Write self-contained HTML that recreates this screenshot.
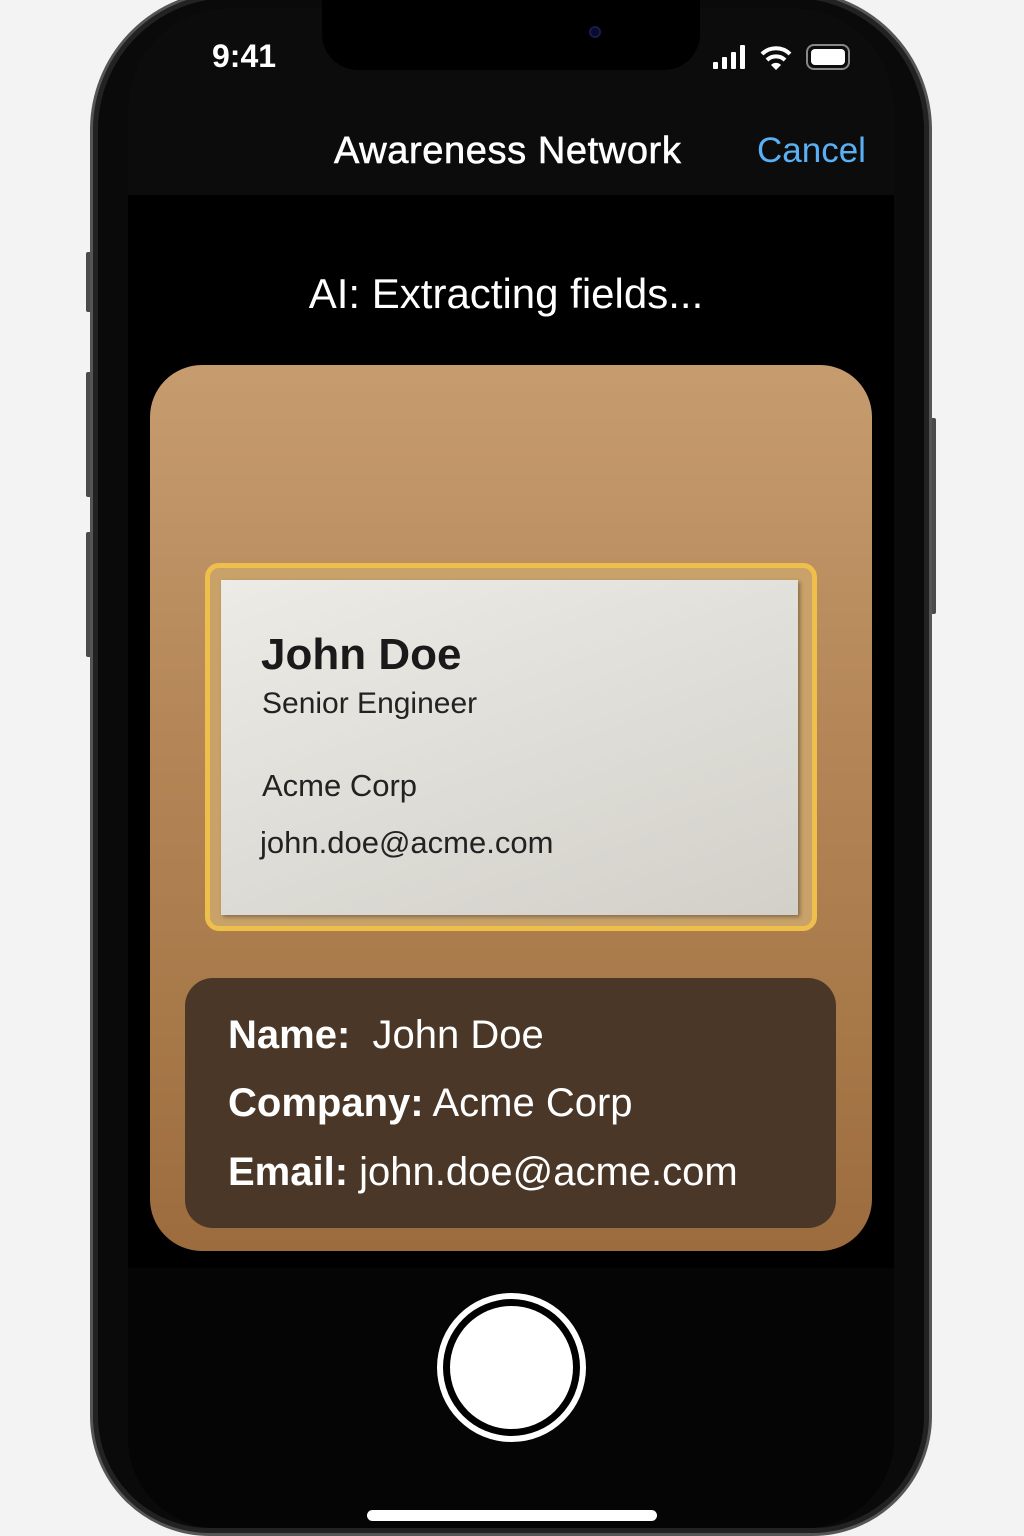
<!DOCTYPE html>
<html style="overflow:hidden"><head><style>
*{margin:0;padding:0;box-sizing:border-box}
html,body{width:1024px;height:1536px;overflow:hidden}
body{background:#f3f3f3;font-family:"Liberation Sans",sans-serif}
#w{position:relative;width:1024px;height:1536px;overflow:hidden}
.abs{position:absolute}
.phone{left:90px;top:-10px;width:842px;height:1546px;border-radius:140px 140px 120px 120px;background:#0a0a0a;border:3px solid #555;box-shadow:inset 0 0 0 5px #222}
.screen{left:128px;top:8px;width:766px;height:1520px;border-radius:100px 100px 90px 90px;background:#000;overflow:hidden}
.btn{background:#4a4a4a;width:6px;border-radius:2px}
</style></head><body><div id="w">
<div class="abs btn" style="left:86px;top:252px;height:60px"></div>
<div class="abs btn" style="left:86px;top:372px;height:125px"></div>
<div class="abs btn" style="left:86px;top:532px;height:125px"></div>
<div class="abs btn" style="left:930px;top:418px;height:196px"></div>
<div class="abs phone"></div>
<div class="abs screen">
  <div class="abs" style="left:0;top:0;width:766px;height:187px;background:#0c0c0c"></div>
  <div class="abs" style="left:0;top:1260px;width:766px;height:400px;background:#050505"></div>
</div>
<div class="abs" style="left:322px;top:0;width:378px;height:70px;background:#000;border-radius:0 0 36px 36px"></div>
<div class="abs" style="left:589px;top:26px;width:12px;height:12px;border-radius:50%;background:#0a0a2a;border:2px solid #1a1a50"></div>
<div class="abs" style="left:212px;top:38px;color:#fff;font-size:32px;font-weight:bold">9:41</div>
<svg class="abs" style="left:710px;top:42px" width="145" height="30" viewBox="0 0 145 30">
  <rect x="3" y="20" width="5" height="7" rx="1" fill="#fff"/><rect x="12" y="15" width="5" height="12" rx="1" fill="#fff"/><rect x="21" y="10" width="5" height="17" rx="1" fill="#fff"/><rect x="30" y="3" width="5" height="24" rx="1" fill="#fff"/>
  <path d="M52 12 A20 20 0 0 1 80 12" stroke="#fff" stroke-width="4" fill="none"/>
  <path d="M57 18 A13 13 0 0 1 75 18" stroke="#fff" stroke-width="4" fill="none"/>
  <path d="M61 23 L66 28 L71 23 A7 7 0 0 0 61 23Z" fill="#fff"/>
  <rect x="97" y="3" width="42" height="24" rx="7" fill="none" stroke="#888" stroke-width="2"/>
  <rect x="101" y="7" width="34" height="16" rx="4" fill="#fff"/>
</svg>
<div class="abs" style="left:334px;top:130px;color:#fff;font-size:38px;letter-spacing:0.6px;-webkit-text-stroke:0.6px #fff">Awareness Network</div>
<div class="abs" style="left:757px;top:131px;color:#5ab0f5;font-size:35px">Cancel</div>
<div class="abs" style="left:0;width:1012px;top:270px;text-align:center;color:#fff;font-size:42px">AI: Extracting fields...</div>
<div class="abs" style="left:150px;top:365px;width:722px;height:886px;border-radius:52px;background:linear-gradient(180deg,#c69c6f 0%,#b58758 40%,#a77848 75%,#9c6c3e 100%)"></div>
<div class="abs" style="left:205px;top:563px;width:612px;height:368px;border-radius:14px;border:5px solid #efbf4c;background:#c9a26a"></div>
<div class="abs" style="left:221px;top:580px;width:577px;height:335px;background:linear-gradient(160deg,#ecebe6,#d2d0c9);box-shadow:2px 2px 4px rgba(0,0,0,.35)"></div>
<div class="abs" style="left:261px;top:630px;font-size:44px;font-weight:bold;color:#1a1a1a">John Doe</div>
<div class="abs" style="left:262px;top:687px;font-size:30px;color:#222">Senior Engineer</div>
<div class="abs" style="left:262px;top:768px;font-size:31px;color:#222">Acme Corp</div>
<div class="abs" style="left:260px;top:825px;font-size:31px;color:#222">john.doe@acme.com</div>
<div class="abs" style="left:185px;top:978px;width:651px;height:250px;border-radius:28px;background:#4a3727"></div>
<div class="abs" style="left:228px;top:1013px;font-size:40px;color:#fff"><b>Name:</b>&nbsp; John Doe</div>
<div class="abs" style="left:228px;top:1081px;font-size:40px;color:#fff"><b>Company:</b> Acme Corp</div>
<div class="abs" style="left:228px;top:1150px;font-size:40px;color:#fff"><b>Email:</b> john.doe@acme.com</div>
<div class="abs" style="left:437px;top:1293px;width:149px;height:149px;border-radius:50%;background:#fff"></div>
<div class="abs" style="left:443px;top:1299px;width:137px;height:137px;border-radius:50%;background:#000"></div>
<div class="abs" style="left:450px;top:1306px;width:123px;height:123px;border-radius:50%;background:#fff"></div>
<div class="abs" style="left:367px;top:1510px;width:290px;height:11px;border-radius:6px;background:#fff"></div>
</div></body></html>
